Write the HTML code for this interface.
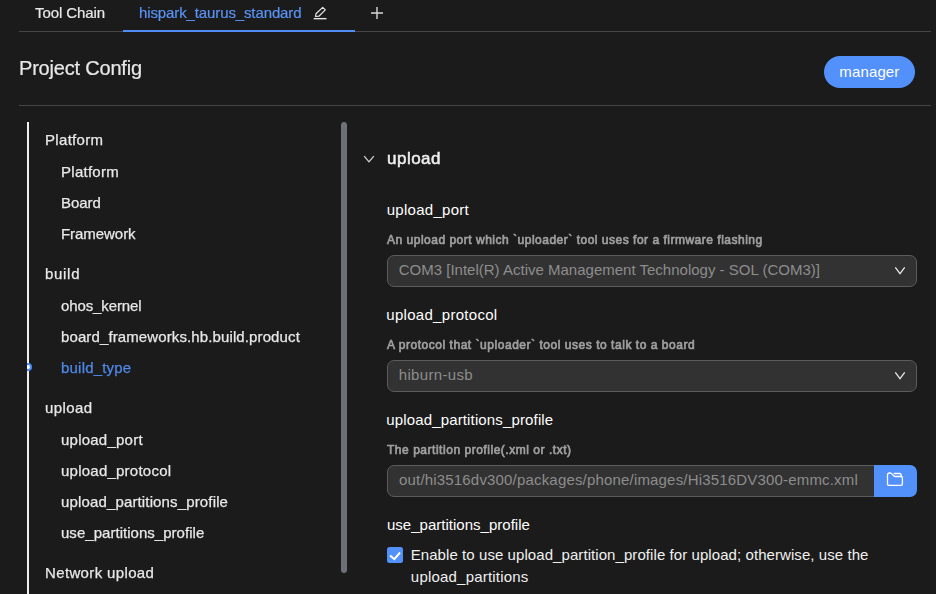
<!DOCTYPE html>
<html><head><meta charset="utf-8">
<style>
html,body{margin:0;padding:0;}
body{width:936px;height:594px;background:#1b1b1b;overflow:hidden;position:relative;font-family:"Liberation Sans",sans-serif;color:#e4e4e4;}
.abs{position:absolute;white-space:nowrap;line-height:1;}
.t{position:absolute;white-space:nowrap;line-height:20px;height:20px;font-size:15px;}
.tab,.title,.nav,.head,.desc{will-change:transform;}
.tab{font-size:15px;-webkit-text-stroke:0.2px;}
.title{font-size:20px;line-height:28px;height:28px;color:#e8e8e8;-webkit-text-stroke:0.2px #e8e8e8;}
.mgr{color:#fff;}
.nav{color:#e8e8e8;-webkit-text-stroke:0.25px;}
.head{font-size:17px;color:#f0f0f0;-webkit-text-stroke:0.5px #f0f0f0;}
.lbl{color:#ffffff;}
.lbl2{color:#f0f0f0;}
.desc{font-size:12px;color:#a0a0a0;-webkit-text-stroke:0.65px #a0a0a0;}
.box{position:absolute;box-sizing:border-box;background:#323232;border:1px solid #5c5c5c;border-radius:7px;height:32px;}
.val{color:#8d8d8d;}
</style></head><body>
<!-- tab bar -->
<svg class="abs" style="left:312px;top:5px" width="16" height="16" viewBox="0 0 16 16" fill="none" stroke="#e6e6e6" stroke-width="1.3"><path d="M10.7 2.4 L13.3 4.9 L6.9 11.2 L3.5 11.5 L4.0 8.7 Z" stroke-linejoin="round" stroke-width="1.2"/><path d="M1.7 13.65 H14.5" stroke-width="1.4"/></svg>
<svg class="abs" style="left:370px;top:6px" width="14" height="14" viewBox="0 0 14 14" stroke="#d8d8d8" stroke-width="1.4"><path d="M7 1V13M1 7H13"/></svg>
<div class="abs" style="left:19px;top:31px;width:912px;height:1px;background:#454545;"></div>
<div class="abs" style="left:123px;top:30px;width:232px;height:2px;background:#4f8df5;"></div>
<!-- header -->
<div class="abs" style="left:824px;top:56px;width:91px;height:32px;border-radius:16px;background:#5291fb;"></div>
<div class="abs" style="left:19px;top:105px;width:912px;height:1px;background:#454545;"></div>
<!-- sidebar -->
<div class="abs" style="left:27px;top:122px;width:2px;height:472px;background:#f0f0f0;"></div>
<div class="abs" style="left:341px;top:122px;width:6px;height:451px;background:#6e7078;border-radius:3px;"></div>
<div class="abs" style="left:27px;top:360px;width:10px;height:14px;overflow:hidden;"><div style="position:absolute;left:-3px;top:3px;width:8px;height:8px;box-sizing:border-box;border-radius:50%;background:#fff;border:2px solid #4a8df8;"></div></div>
<!-- content -->
<svg class="abs" style="left:362px;top:153px" width="14" height="12" viewBox="0 0 14 12" fill="none" stroke="#d8d8d8" stroke-width="1.2"><path d="M2.2 3.1 L7 8.9 L11.8 3.1"/></svg>
<div class="box" style="left:387px;top:255px;width:530px;"></div>
<svg class="abs" style="left:893px;top:265px" width="15" height="12" viewBox="0 0 15 12" fill="none" stroke="#e6e6e6" stroke-width="1.3"><path d="M2.3 2.3 L7 8.6 L11.7 2.3"/></svg>
<div class="box" style="left:387px;top:360px;width:530px;"></div>
<svg class="abs" style="left:893px;top:370px" width="15" height="12" viewBox="0 0 15 12" fill="none" stroke="#e6e6e6" stroke-width="1.3"><path d="M2.3 2.3 L7 8.6 L11.7 2.3"/></svg>
<div class="box" style="left:387px;top:465px;width:488px;border-radius:7px 0 0 7px;"></div>
<div class="abs" style="left:874px;top:465px;width:43px;height:32px;background:#5291fb;border-radius:0 7px 7px 0;"></div>
<svg class="abs" style="left:885px;top:471px" width="20" height="18" viewBox="0 0 20 18" fill="none" stroke="#ffffff" stroke-width="1.3" stroke-linejoin="round" stroke-linecap="round"><path d="M2.5 4 Q2.5 2 4.5 2 H5.2 Q5.9 2 6.5 2.6 L9 5 Q9.5 5.5 10.2 5.5 H16 Q17.4 5.5 17.4 6.9 V13 Q17.4 14.4 16 14.4 H3.9 Q2.5 14.4 2.5 13 Z"/><path d="M9.2 2.5 H14.7 Q16.1 2.5 16.3 4.8"/></svg>
<div class="abs" style="left:387px;top:547px;width:16px;height:16px;border-radius:2.5px;background:#5291fb;"></div>
<svg class="abs" style="left:387px;top:547px" width="16" height="16" viewBox="0 0 16 16" fill="none" stroke="#fff" stroke-width="2"><path d="M3.0 8.4 L7.4 12.1 L13.0 5.5"/></svg>
<!-- text -->
<div id="tc" class="t tab" style="left:35.00px;top:3px;letter-spacing:-0.079px;color:#e8e8e8;">Tool Chain</div>
<div id="hs" class="t tab" style="left:139.00px;top:3px;letter-spacing:-0.116px;color:#5a93f5;">hispark_taurus_standard</div>
<div id="pc" class="t title" style="left:19.00px;top:54px;letter-spacing:-0.194px;">Project Config</div>
<div id="mg" class="t mgr" style="left:839.34px;top:62px;letter-spacing:0.133px;">manager</div>
<div id="n1" class="t nav" style="left:45.00px;top:130px;letter-spacing:0.318px;">Platform</div>
<div id="n2" class="t nav" style="left:61.00px;top:162px;letter-spacing:0.270px;">Platform</div>
<div id="n3" class="t nav" style="left:61.00px;top:193px;letter-spacing:-0.068px;">Board</div>
<div id="n4" class="t nav" style="left:61.00px;top:224px;letter-spacing:-0.055px;">Framework</div>
<div id="n5" class="t nav" style="left:45.00px;top:264px;letter-spacing:0.696px;">build</div>
<div id="n6" class="t nav" style="left:61.00px;top:296px;letter-spacing:-0.108px;">ohos_kernel</div>
<div id="n7" class="t nav" style="left:61.00px;top:327px;letter-spacing:0.115px;">board_frameworks.hb.build.product</div>
<div id="n8" class="t nav" style="left:61.00px;top:358px;letter-spacing:0.203px;color:#4f88ea;">build_type</div>
<div id="n9" class="t nav" style="left:45.00px;top:398px;letter-spacing:0.429px;">upload</div>
<div id="n10" class="t nav" style="left:61.00px;top:430px;letter-spacing:0.234px;">upload_port</div>
<div id="n11" class="t nav" style="left:61.00px;top:461px;letter-spacing:0.237px;">upload_protocol</div>
<div id="n12" class="t nav" style="left:61.00px;top:492px;letter-spacing:0.146px;">upload_partitions_profile</div>
<div id="n13" class="t nav" style="left:61.00px;top:523px;letter-spacing:0.032px;">use_partitions_profile</div>
<div id="n14" class="t nav" style="left:45.00px;top:563px;letter-spacing:0.358px;">Network upload</div>
<div id="h" class="t head" style="left:387.00px;top:149px;letter-spacing:0.491px;">upload</div>
<div id="l1" class="t lbl" style="left:386.74px;top:200px;letter-spacing:0.278px;">upload_port</div>
<div id="d1" class="t desc" style="left:387.00px;top:230px;letter-spacing:0.506px;">An upload port which `uploader` tool uses for a firmware flashing</div>
<div id="v1" class="t val" style="left:398.73px;top:260px;letter-spacing:0.004px;">COM3 [Intel(R) Active Management Technology - SOL (COM3)]</div>
<div id="l2" class="t lbl" style="left:386.31px;top:305px;letter-spacing:0.294px;">upload_protocol</div>
<div id="d2" class="t desc" style="left:387.00px;top:335px;letter-spacing:0.533px;">A protocol that `uploader` tool uses to talk to a board</div>
<div id="v2" class="t val" style="left:398.72px;top:365px;letter-spacing:0.335px;">hiburn-usb</div>
<div id="l3" class="t lbl" style="left:386.31px;top:410px;letter-spacing:0.143px;">upload_partitions_profile</div>
<div id="d3" class="t desc" style="left:387.00px;top:440px;letter-spacing:0.529px;">The partition profile(.xml or .txt)</div>
<div id="v3" class="t val" style="left:399.02px;top:470px;letter-spacing:0.178px;">out/hi3516dv300/packages/phone/images/Hi3516DV300-emmc.xml</div>
<div id="l4" class="t lbl" style="left:387.01px;top:515px;letter-spacing:0.015px;">use_partitions_profile</div>
<div id="e1" class="t lbl2" style="left:410.69px;top:545px;letter-spacing:0.073px;">Enable to use upload_partition_profile for upload; otherwise, use the</div>
<div id="e2" class="t lbl2" style="left:410.86px;top:567px;letter-spacing:0.200px;">upload_partitions</div>
</body></html>
